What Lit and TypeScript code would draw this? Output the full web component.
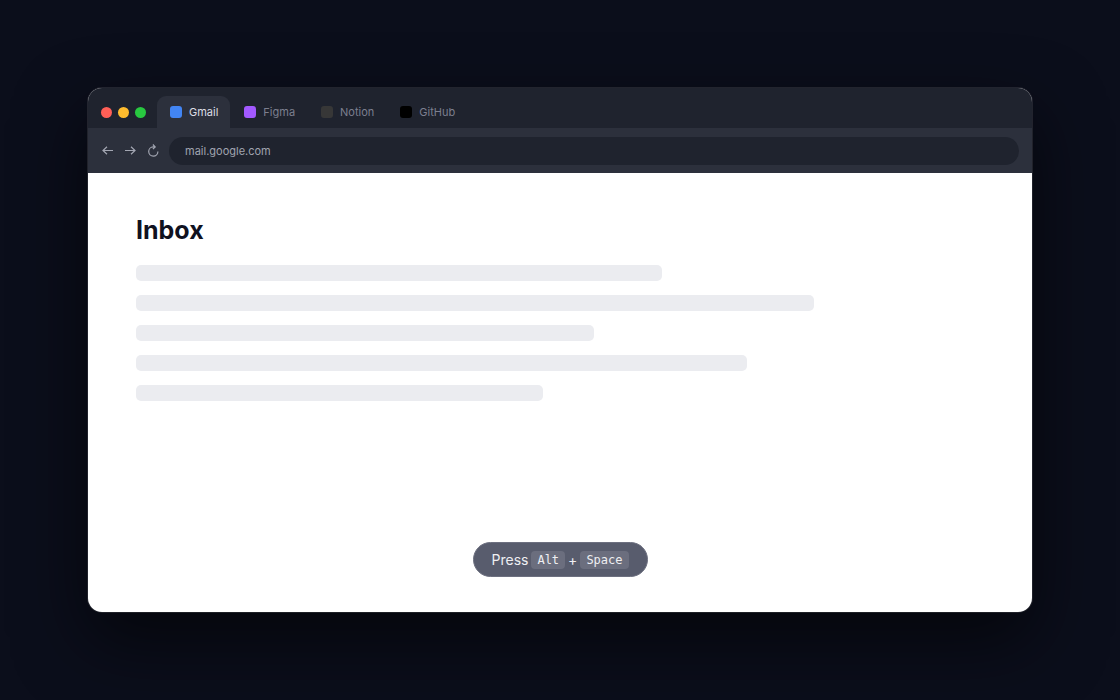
import { LitElement, html, css } from "lit";
import { customElement, state } from "lit/decorators.js";
import { classMap } from "lit/directives/class-map.js";

interface Tab {
  name: string;
  url: string;
  tone: string;
}

const TABS: Tab[] = [
  { name: "Gmail", url: "mail.google.com", tone: "blue" },
  { name: "Figma", url: "figma.com", tone: "purple" },
  { name: "Notion", url: "notion.so", tone: "gray" },
  { name: "GitHub", url: "github.com", tone: "black" },
];

const LINES = [62, 80, 54, 72, 48];

@customElement("app-root")
export class AppRoot extends LitElement {
  static styles = css`
    :host {
      display: block;
      font-family: Inter, "Liberation Sans", sans-serif;
    }
    * {
      box-sizing: border-box;
    }
    .stage {
      display: flex;
      min-height: 100vh;
      padding: 88px;
      background: #0b0e1b;
      overflow: hidden;
    }
    .window {
      flex: 1;
      display: flex;
      flex-direction: column;
      border-radius: 14px;
      overflow: hidden;
      background: #fff;
      box-shadow: 0 0 0 1px rgba(255, 255, 255, 0.1), 0 28px 70px rgba(0, 0, 0, 0.6);
    }
    .tabbar {
      display: flex;
      align-items: flex-end;
      height: 40px;
      padding: 0 13px;
      background: #1f232e;
    }
    .lights {
      display: flex;
      gap: 6px;
      align-items: center;
      height: 32px;
      margin-right: 11px;
    }
    .light {
      width: 11px;
      height: 11px;
      border-radius: 50%;
    }
    .red { background: #ff5f57; }
    .yellow { background: #febc2e; }
    .green { background: #28c840; }
    .tabs {
      display: flex;
      gap: 1px;
    }
    .tab {
      display: flex;
      align-items: center;
      gap: 7px;
      height: 32px;
      padding: 0 12px 0 13px;
      border: 0;
      border-radius: 9px 9px 0 0;
      background: none;
      color: #7c7f8e;
      font: 11px/16px Inter, "Liberation Sans", sans-serif;
    }
    .tab.active {
      background: #2c303c;
      color: #dcdde4;
    }
    .favicon {
      width: 12px;
      height: 12px;
      border-radius: 3px;
    }
    .blue { background: #4285f4; }
    .purple { background: #a259ff; }
    .gray { background: #373737; }
    .black { background: #000; }
    .toolbar {
      display: flex;
      align-items: center;
      gap: 9px;
      height: 45px;
      padding: 0 13px;
      background: #2c303c;
    }
    .nav {
      display: flex;
      gap: 10px;
    }
    .navbtn {
      display: flex;
      padding: 0;
      border: 0;
      background: none;
      color: #a3a6b2;
    }
    .icon {
      width: 13px;
      height: 14px;
      fill: none;
      stroke: currentColor;
      stroke-width: 1.2;
    }
    .address {
      flex: 1;
      min-width: 0;
      height: 28px;
      padding: 0 16px;
      border: 0;
      border-radius: 14px;
      background: #1f232e;
      color: #a0a3b0;
      font: 11px/16px Inter, "Liberation Sans", sans-serif;
    }
    .page {
      flex: 1;
      display: flex;
      flex-direction: column;
      padding: 40px 48px 35px;
    }
    .title {
      margin: 0 0 18px;
      color: #10121f;
      font-size: 25px;
      font-weight: 700;
      line-height: 34px;
    }
    .lines {
      display: flex;
      flex-direction: column;
      gap: 14px;
    }
    .line {
      height: 16px;
      border-radius: 5px;
      background: #ebecf0;
    }
    .hint {
      display: flex;
      align-items: center;
      align-self: center;
      gap: 3px;
      height: 35px;
      margin-top: auto;
      padding: 0 18px;
      border: 1px solid #6d7080;
      border-radius: 18px;
      background: #585c6d;
      color: #eeeff2;
      font-size: 14px;
      line-height: 20px;
    }
    .key {
      padding: 0 6px;
      border-radius: 4px;
      background: #6b6e7e;
      font: 12px/18px "DejaVu Sans Mono", monospace;
    }
  `;

  @state() private active = 0;

  render() {
    return html`
      <main class="stage">
        <section class="window" aria-label="Browser">
          <div class="tabbar">
            <div class="lights">
              <span class="light red"></span>
              <span class="light yellow"></span>
              <span class="light green"></span>
            </div>
            <div class="tabs" role="tablist">
              ${TABS.map(
                (t, i) => html`<button
                  class=${classMap({ tab: true, active: i === this.active })}
                  role="tab"
                  aria-selected=${i === this.active}
                  @click=${() => (this.active = i)}
                ><span class="favicon ${t.tone}"></span>${t.name}</button>`
              )}
            </div>
          </div>
          <div class="toolbar">
            <div class="nav">
              <button class="navbtn" aria-label="Back">
                <svg class="icon" viewBox="0 0 13 14"><path d="M12 6.500H2M6 2.700 2 6.500l4 3.800" /></svg>
              </button>
              <button class="navbtn" aria-label="Forward">
                <svg class="icon" viewBox="0 0 13 14"><path d="M1 6.500h10M7 2.700l4 3.800-4 3.800" /></svg>
              </button>
              <button class="navbtn" aria-label="Reload">
                <svg class="icon" viewBox="0 0 13 14"><path d="M8 2.900H6.200A4.600 4.600 0 1 0 10.900 7.500M5.900 .500 8.200 2.900 5.900 5.200" /></svg>
              </button>
            </div>
            <input class="address" type="text" aria-label="Address" .value=${TABS[this.active].url} />
          </div>
          <div class="page">
            <h1 class="title">Inbox</h1>
            <div class="lines">
              ${LINES.map((w) => html`<div class="line" style="width:${w}%"></div>`)}
            </div>
            <div class="hint">
              <span>Press</span><kbd class="key">Alt</kbd><span>+</span><kbd class="key">Space</kbd>
            </div>
          </div>
        </section>
      </main>
    `;
  }
}
